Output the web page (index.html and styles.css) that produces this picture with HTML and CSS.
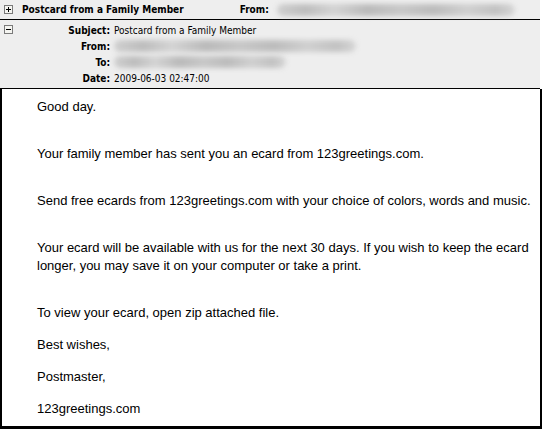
FILE: index.html
```html
<!DOCTYPE html>
<html>
<head>
<meta charset="utf-8">
<link rel="stylesheet" href="styles.css">
</head>
<body>
<div class="mail">
  <div class="bar">
    <span class="tog"><svg width="9" height="9" viewBox="0 0 9 9"><rect x="0.5" y="0.5" width="8" height="8" fill="#f4f4f0" stroke="#7a7a7a"/><path d="M2 4.5h5M4.5 2v5" stroke="#000" stroke-width="1"/></svg></span>
    <span class="title">Postcard from a Family Member</span>
    <span class="title from">From:</span>
    <span class="blur blur-head"></span>
  </div>
  <div class="details">
    <span class="tog"><svg width="9" height="9" viewBox="0 0 9 9"><rect x="0.5" y="0.5" width="8" height="8" fill="#f4f4f0" stroke="#7a7a7a"/><path d="M2 4.5h5" stroke="#000" stroke-width="1"/></svg></span>
    <div class="fields">
      <span class="lbl">Subject:</span><span class="val">Postcard from a Family Member</span>
      <span class="lbl">From:</span><span class="val"><span class="blur blur-from"></span></span>
      <span class="lbl">To:</span><span class="val"><span class="blur blur-to"></span></span>
      <span class="lbl">Date:</span><span class="val">2009-06-03 02:47:00</span>
    </div>
  </div>
  <div class="body">
    <p class="first">Good day.</p>
    <p class="wide">Your family member has sent you an ecard from 123greetings.com.</p>
    <p class="wide">Send free ecards from 123greetings.com with your choice of colors, words and music.</p>
    <p class="wide">Your ecard will be available with us for the next 30 days. If you wish to keep the ecard<br>longer, you may save it on your computer or take a print.</p>
    <p class="wide">To view your ecard, open zip attached file.</p>
    <p>Best wishes,</p>
    <p>Postmaster,</p>
    <p>123greetings.com</p>
  </div>
</div>
</body>
</html>
```

FILE: styles.css
```css
html, body {
  margin: 0;
  padding: 0;
  background: #ffffff;
}
.mail {
  width: 542px;
  height: 429px;
  display: flex;
  flex-direction: column;
  overflow: hidden;
}
.bar {
  width: 540px;
  box-sizing: border-box;
  background: #eeeeee;
  border-bottom: 1px solid #000;
  height: 20px;
  display: flex;
  align-items: center;
  padding-left: 4px;
}
.tog {
  display: block;
  width: 9px;
  height: 9px;
  line-height: 0;
}
.tog svg { display: block; }
.title {
  font-family: "DejaVu Sans Condensed", "DejaVu Sans", sans-serif;
  font-weight: bold;
  font-size: 10px;
  color: #000;
  margin-left: 9px;
  white-space: nowrap;
}
.from {
  margin-left: 56px;
}
.blur {
  display: block;
  height: 12px;
  border-radius: 6px;
  background: linear-gradient(90deg, #cfcfcf 0%, #bdbdbd 12%, #d4d4d4 24%, #bababa 38%, #c8c8c8 52%, #bcbcbc 66%, #d0d0d0 80%, #c2c2c2 92%, #d6d6d6 100%);
  filter: blur(2.5px);
}
.blur-head {
  width: 238px;
  margin-left: 8px;
}
.details {
  width: 540px;
  height: 69px;
  box-sizing: border-box;
  background: #eeeeee;
  border-bottom: 1px solid #000;
  display: flex;
  align-items: flex-start;
  padding: 2px 0 0 4px;
}
.details .tog {
  margin-top: 3px;
}
.fields {
  display: grid;
  grid-template-columns: 97px auto;
  grid-auto-rows: 16px;
  column-gap: 4px;
  font-family: "DejaVu Sans Condensed", "DejaVu Sans", sans-serif;
  font-size: 10px;
  align-items: center;
}
.lbl {
  font-weight: bold;
  text-align: right;
}
.val {
  white-space: nowrap;
}
.blur-from {
  width: 242px;
}
.blur-to {
  width: 172px;
}
.body {
  flex: 1;
  box-sizing: border-box;
  border-left: 2px solid #000;
  border-right: 2px solid #000;
  border-bottom: 3px solid #000;
  padding: 9px 0 0 35px;
  font-family: "Liberation Sans", Arial, sans-serif;
  font-size: 13px;
  line-height: 18px;
  color: #000;
}
.body p {
  margin: 14px 0 0 0;
}
.body p.first {
  margin-top: 0;
}
.body p.wide {
  margin-top: 29px;
}
```
